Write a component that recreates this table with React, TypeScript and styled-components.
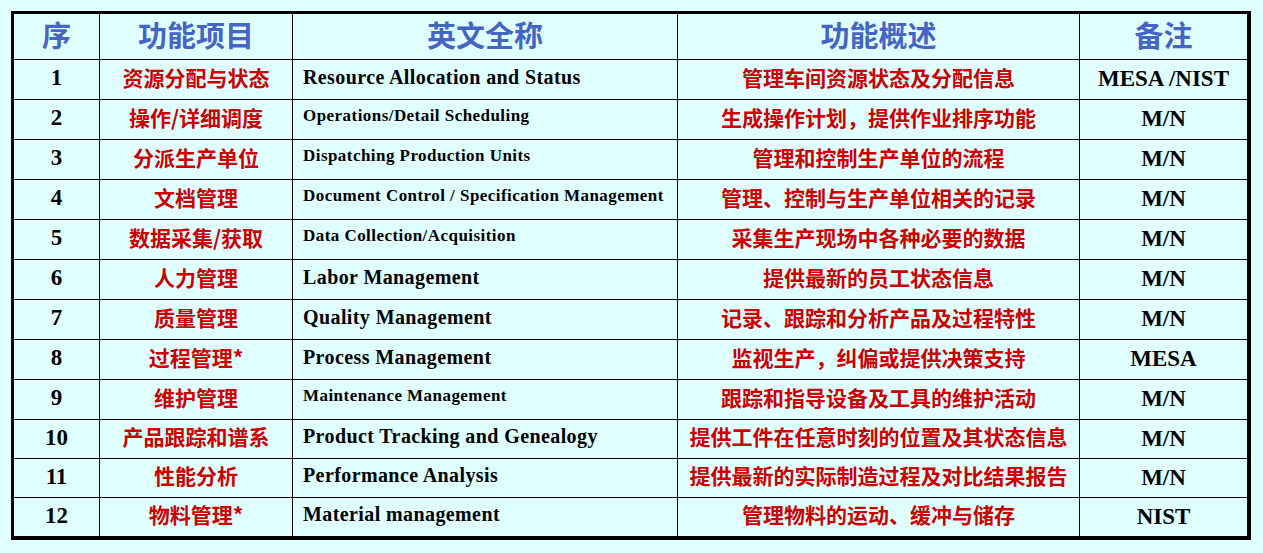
import * as React from "react";
import styled, { createGlobalStyle } from "styled-components";

type Row = {
  no: number;
  name: string;
  english: string;
  small?: boolean;
  summary: string;
  note: string;
};

const rows: Row[] = [
  { no: 1, name: "资源分配与状态", english: "Resource Allocation and Status", summary: "管理车间资源状态及分配信息", note: "MESA /NIST" },
  { no: 2, name: "操作/详细调度", english: "Operations/Detail Scheduling", small: true, summary: "生成操作计划，提供作业排序功能", note: "M/N" },
  { no: 3, name: "分派生产单位", english: "Dispatching Production Units", small: true, summary: "管理和控制生产单位的流程", note: "M/N" },
  { no: 4, name: "文档管理", english: "Document Control / Specification Management", small: true, summary: "管理、控制与生产单位相关的记录", note: "M/N" },
  { no: 5, name: "数据采集/获取", english: "Data Collection/Acquisition", small: true, summary: "采集生产现场中各种必要的数据", note: "M/N" },
  { no: 6, name: "人力管理", english: "Labor Management", summary: "提供最新的员工状态信息", note: "M/N" },
  { no: 7, name: "质量管理", english: "Quality Management", summary: "记录、跟踪和分析产品及过程特性", note: "M/N" },
  { no: 8, name: "过程管理*", english: "Process Management", summary: "监视生产，纠偏或提供决策支持", note: "MESA" },
  { no: 9, name: "维护管理", english: "Maintenance Management", small: true, summary: "跟踪和指导设备及工具的维护活动", note: "M/N" },
  { no: 10, name: "产品跟踪和谱系", english: "Product Tracking and Genealogy", summary: "提供工件在任意时刻的位置及其状态信息", note: "M/N" },
  { no: 11, name: "性能分析", english: "Performance Analysis", summary: "提供最新的实际制造过程及对比结果报告", note: "M/N" },
  { no: 12, name: "物料管理*", english: "Material management", summary: "管理物料的运动、缓冲与储存", note: "NIST" },
];

const headers = ["序", "功能项目", "英文全称", "功能概述", "备注"];

export default function App() {
  return (
    <>
      <GlobalStyle />
      <Page>
        <Table>
          {headers.map((h) => (
            <HeadCell key={h}>{h}</HeadCell>
          ))}
          {rows.map((r) => (
            <React.Fragment key={r.no}>
              <NumCell>{r.no}</NumCell>
              <RedCell>{r.name}</RedCell>
              <EnglishCell $small={r.small}>{r.english}</EnglishCell>
              <RedCell>{r.summary}</RedCell>
              <NoteCell>{r.note}</NoteCell>
            </React.Fragment>
          ))}
        </Table>
      </Page>
    </>
  );
}

const GlobalStyle = createGlobalStyle`
  html, body {
    margin: 0;
    padding: 0;
    background: #e0ffff;
  }
`;

const Page = styled.div`
  padding: 11px 0 0 11px;
  background: #e0ffff;
  min-height: 553px;
  box-sizing: border-box;
`;

const Table = styled.div`
  display: inline-grid;
  grid-template-columns: 85px 192px 384px 401px 167px;
  grid-template-rows: 45px repeat(9, 39px) repeat(3, 38px);
  gap: 1px;
  background: #000;
  border-style: solid;
  border-color: #000;
  border-width: 3px 4px 4px 3px;
`;

const Cell = styled.div`
  background: #e0ffff;
  display: flex;
  align-items: center;
  justify-content: center;
  white-space: nowrap;
  overflow: hidden;
`;

const HeadCell = styled(Cell)`
  font-family: "Noto Sans CJK SC", sans-serif;
  font-weight: 700;
  font-size: 29px;
  color: #4565c4;
  padding-bottom: 5px;
`;

const NumCell = styled(Cell)`
  font-family: "Liberation Serif", serif;
  font-weight: 700;
  font-size: 23px;
  color: #000;
  padding-bottom: 3px;
`;

const RedCell = styled(Cell)`
  font-family: "Noto Sans CJK SC", sans-serif;
  font-weight: 700;
  font-size: 21px;
  color: #cc0000;
  padding-bottom: 6px;
`;

const EnglishCell = styled(Cell)<{ $small?: boolean }>`
  justify-content: flex-start;
  padding-left: 10px;
  font-family: "Liberation Serif", serif;
  font-weight: 700;
  font-size: ${(p) => (p.$small ? "17px" : "20px")};
  letter-spacing: ${(p) => (p.$small ? "0.45px" : "0.4px")};
  padding-bottom: ${(p) => (p.$small ? "8px" : "5px")};
  color: #000;
`;

const NoteCell = styled(Cell)`
  font-family: "Liberation Serif", serif;
  font-weight: 700;
  font-size: 23px;
  color: #000;
  padding-bottom: 1px;
`;
